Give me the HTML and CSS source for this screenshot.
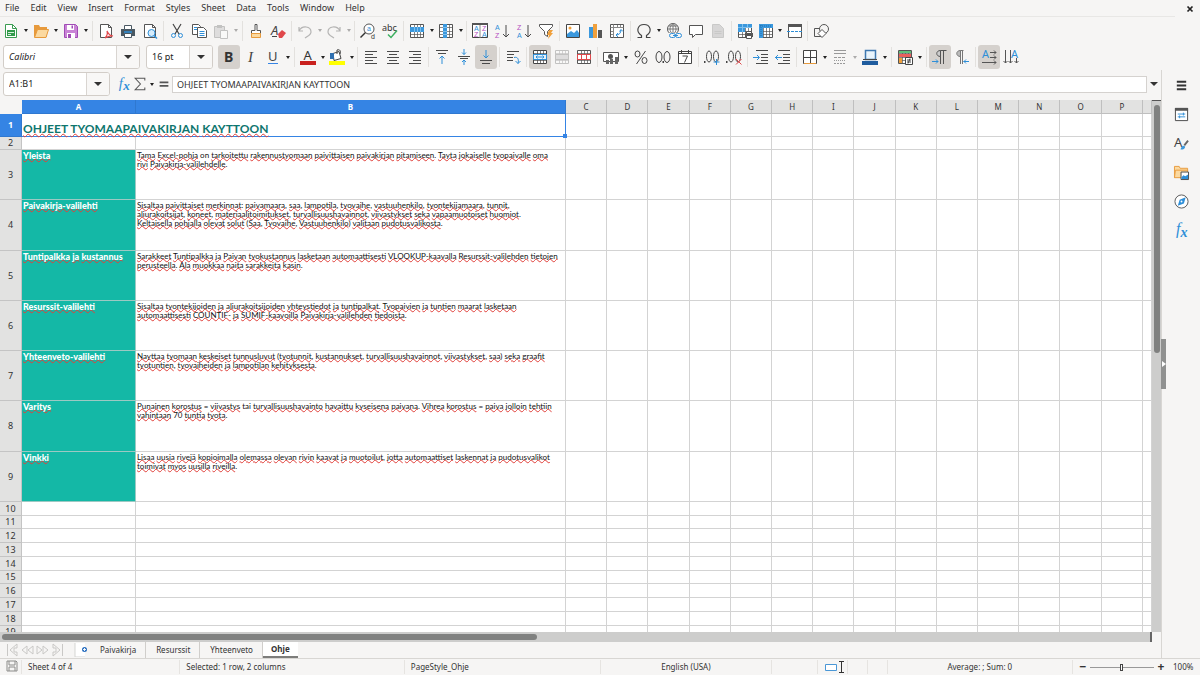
FILE: index.html
```html
<!DOCTYPE html>
<html lang="fi">
<head>
<meta charset="utf-8">
<title>Calc</title>
<link rel="stylesheet" href="styles.css">
</head>
<body>
<div class="app">
  <header class="menubar">
    <nav class="menus">
      <button>File</button><button>Edit</button><button>View</button><button>Insert</button><button>Format</button><button>Styles</button><button>Sheet</button><button>Data</button><button>Tools</button><button>Window</button><button>Help</button>
    </nav>
    <button class="close" aria-label="Close document"><svg viewBox="0 0 8 8"><path d="M1.5 1.5l5 5M6.5 1.5l-5 5" stroke="#222" stroke-width="1.7" fill="none"/></svg></button>
  </header>
  <div class="toolbar" id="standard-bar" role="toolbar" aria-label="Standard"></div>
  <div class="toolbar format" id="format-bar" role="toolbar" aria-label="Formatting">
    <div class="combo font-name"><input type="text" value="Calibri" aria-label="Font name"><button aria-label="Show fonts"><i class="tri"></i></button></div>
    <div class="combo font-size"><input type="text" value="16 pt" aria-label="Font size"><button aria-label="Show sizes"><i class="tri"></i></button></div>
  </div>
  <div class="workspace">
    <main class="document">
      <div class="formula-bar">
        <div class="combo name-box"><input type="text" value="A1:B1" aria-label="Name box"><button aria-label="Show names"><i class="tri"></i></button></div>
        <div class="formula-tools" id="formula-tools"></div>
        <input class="formula" type="text" value="OHJEET TYOMAAPAIVAKIRJAN KAYTTOON" aria-label="Formula">
        <button class="expand" aria-label="Expand formula bar"><i class="tri"></i></button>
      </div>
      <div class="sheet-area">
        <div class="sheet-view">
          <table class="sheet">
            <colgroup id="cols"></colgroup>
            <thead id="head"></thead>
            <tbody id="rows"></tbody>
          </table>
        </div>
        <div class="vscroll"><div class="vthumb"></div></div>
      </div>
      <div class="hscroll"><div class="hthumb"></div></div>
      <div class="tabs">
        <div class="tab-nav" id="tab-nav"></div>
        <button class="add-sheet" aria-label="Add sheet"><svg viewBox="0 0 14 14"><path d="M1 0h10v14H1z" fill="#fff"/><path d="M1 0v14h10" stroke="#d5d5d3" fill="none"/><circle cx="10.500" cy="6.500" r="2.500" fill="#2a6fc0"/><path d="M9 6.500h3M10.500 5v3" stroke="#fff" stroke-width=".9"/></svg></button>
        <button class="tab">Paivakirja</button><button class="tab">Resurssit</button><button class="tab">Yhteenveto</button><button class="tab active">Ohje</button>
      </div>
    </main>
    <aside class="sidebar" id="sidebar"></aside>
    <button class="sidebar-handle" aria-label="Hide sidebar"><svg viewBox="0 0 4 6"><path d="M0 0l4 3-4 3z" fill="#fff"/></svg></button>
  </div>
  <footer class="statusbar">
    <div class="save-state"><svg viewBox="0 0 12 12" fill="none" stroke="#8c8c8a"><path d="M1 1h9l1 1v9H1zM3 1v4h6V1M3 11V7h6v4"/></svg></div>
    <div>Sheet 4 of 4</div>
    <div>Selected: 1 row, 2 columns</div>
    <div>PageStyle_Ohje</div>
    <div class="centered">English (USA)</div>
    <div></div>
    <div class="mode"><svg viewBox="0 0 22 14" fill="none"><path d="M1.500 4.500h11v6h-11z" stroke="#4a97d6" fill="#fff"/><path d="M15 1.500h5M15 12.500h5M17.500 1.500v11" stroke="#333"/></svg></div>
    <div></div>
    <div></div>
    <div class="centered">Average: ; Sum: 0</div>
    <div class="zoom"><button aria-label="Zoom out">−</button><input type="range" min="0" max="100" value="49" aria-label="Zoom"><button aria-label="Zoom in">+</button><span>100%</span></div>
  </footer>
</div>
<script src="app.js"></script>
</body>
</html>
```
FILE: styles.css
```css
* { box-sizing: border-box; }
body { margin: 0; background: #f6f5f4; color: #333; font: 8px/12px "Noto Sans", sans-serif; }
button, input { font: inherit; color: inherit; border: 0; background: none; padding: 0; margin: 0; outline: 0; }
svg { display: block; }
.app { display: flex; flex-direction: column; height: 100vh; overflow: hidden; }

.menubar { display: flex; justify-content: space-between; align-items: center; height: 17px; flex: none; margin-right: 6px; font-size: 9px; }
.menus { display: flex; flex: 1; height: 17px; margin-right: 11px; border-bottom: 1px solid #e8e7e5; }
.menus button { padding: 0 6px 0 5px; }
.close svg { width: 8px; height: 8px; }

.toolbar { display: flex; align-items: center; height: 27px; flex: none; }
.format { height: 26px; padding-left: 3px; }
.group { display: flex; align-items: center; }
.group + .group::before { content: ""; width: 1px; height: 20px; margin: 0 2px; background: #e3e1de; }
.tool { display: grid; place-items: center; width: 22px; height: 24px; border-radius: 3px; }
.tool svg { width: 16px; height: 16px; overflow: visible; }
.tool.on { background: #d5d1cd; }
.tool.off { opacity: .4; }
.tight .tool { width: 21px; }
.drop { display: grid; place-items: center; width: 8px; height: 24px; }
.narrow-drop .drop { width: 7px; }
.drop::before, .tri { content: ""; display: block; width: 0; border: 2px solid transparent; border-top: 3px solid #222; border-bottom: 0; }
.drop.off { opacity: .35; }
.tri { border-width: 4px 4px 0; border-top-color: #333; }

.combo { display: flex; height: 24px; border: 1px solid #d2cdc8; border-radius: 3px; background: #fff; overflow: hidden; font-size: 9px; color: #222; }
.combo input { flex: 1; min-width: 0; padding: 0 5px; }
.combo button { width: 23px; border-left: 1px solid #d9d5d1; background: #f8f7f6; display: grid; place-items: center; }
.font-name { width: 137px; margin-right: 6px; font-style: italic; }
.font-size { width: 67px; margin-right: 5px; }

.workspace { position: relative; display: flex; flex: 1; min-height: 0; }
.document { flex: 1; min-width: 0; display: flex; flex-direction: column; border-right: 1px solid #d8d6d3; }
.formula-bar { display: flex; align-items: center; height: 30px; flex: none; padding: 0 0 2px 3px; }
.name-box { width: 107px; }
.formula-tools { display: flex; align-items: center; padding-left: 6px; }
.formula-tools .tool { width: 16px; }
.formula-tools .tool svg { width: 14px; height: 14px; }
.formula { flex: 1; min-width: 0; height: 17px; padding: 0 4px; border: 1px solid #d5d2cf; background: #fff; font-size: 9px; }
.expand { display: grid; place-items: center; width: 14px; height: 17px; }

.sheet-area { display: flex; flex: 1; min-height: 0; }
.sheet-view { flex: 1; min-width: 0; overflow: hidden; background: #fff; }
.sheet { width: 100%; table-layout: fixed; border-collapse: separate; border-spacing: 0; background: #fff; }
.sheet th, .sheet td { padding: 0; border-right: 1px solid #d3d3d3; border-bottom: 1px solid #d3d3d3; }
.sheet thead th { height: 14px; line-height: 12px; font-weight: 400; background: #e2e2e1; border-color: #bfbfbf; }
.sheet tbody th { font-size: 9px; line-height: 10px; font-weight: 400; background: #e2e2e1; border-color: #c4c4c4; }
.sheet thead .picked, .sheet tbody .picked { font-weight: 700; color: #fff; background: #3584e4; border-color: #2f78d0; }
.sheet thead .corner { background: #f6f5f4; border-color: #f6f5f4; }
.sheet td { vertical-align: top; }
.sheet .title { position: relative; vertical-align: bottom; padding-left: 1px; border-right: 1px solid #3584e4; border-bottom: 1px solid #3584e4; font: 700 12px/15px Lato, sans-serif; color: #0f766e; white-space: nowrap; }
.title::after { content: ""; position: absolute; right: -2px; bottom: -2px; width: 4px; height: 4px; background: #3584e4; }
.sheet .topic { padding-left: 1px; background: #14b8a6; border-color: #9cc9c3; font: 900 9px/11px Lato, sans-serif; color: #fff; white-space: nowrap; }
.sheet .body { padding: 1px 0 0 1px; font: 8px/9px Lato, sans-serif; color: #111; white-space: nowrap; }
.misspelt { text-decoration: underline wavy #e0403a 1px; text-decoration-skip-ink: none; text-underline-offset: -1px; }
.title .misspelt { text-underline-offset: 0; }

.vscroll { width: 9px; flex: none; padding: 4px 2px 0; background: #cdcdcc; border-top: 1px solid #555; }
.vthumb { width: 6px; height: 47%; border-radius: 3px; background: #808180; }
.hscroll { height: 10px; flex: none; margin-right: 9px; padding: 2px; background: #cdcdcc; border-right: 2px solid #666; }
.hthumb { width: 46.7%; height: 6px; border-radius: 3px; background: #808180; }

.tabs { display: flex; align-items: center; height: 16px; flex: none; }
.tab-nav { display: flex; width: 74px; padding-left: 5px; }
.tab-nav svg { width: 15px; height: 14px; }
.add-sheet svg { width: 14px; height: 14px; }
.tab { height: 16px; padding: 0 9px 0 10px; border-right: 1px solid #d0cecb; }
.add-sheet + .tab { padding-left: 12px; }
.tab.active { padding: 0 8px; font-weight: 700; background: #fff; border-right: 0; border-bottom: 2px solid #7d7d7b; }

.sidebar { width: 38px; flex: none; display: flex; flex-direction: column; align-items: center; gap: 5px; padding-top: 3px; }
.sidebar .tool svg { width: 15px; height: 15px; }
.sidebar-handle { position: absolute; right: 34px; bottom: 269px; width: 5px; height: 50px; background: #909190; display: grid; place-items: center; }
.sidebar-handle svg { width: 4px; height: 6px; }

.statusbar { display: grid; grid-template-columns: 22px 158fr 224fr 196fr 170fr 46px 30px 20px 20px 185fr 127px; align-items: center; height: 17px; flex: none; border-top: 1px solid #d8d6d3; }
.statusbar > div { height: 14px; line-height: 14px; padding-left: 6px; border-right: 1px solid #e6e4e1; white-space: nowrap; }
.statusbar > div:last-child { border-right: 0; }
.statusbar .centered { text-align: center; padding: 0; }
.save-state svg { width: 12px; height: 12px; }
.mode svg { width: 22px; height: 14px; }
.zoom { display: flex; align-items: center; gap: 3px; }
.zoom button { font-size: 12px; font-weight: 700; line-height: 12px; width: 8px; }
.zoom span { margin-left: 5px; }
.zoom input { appearance: none; width: 64px; height: 10px; background: linear-gradient(#999, #999) center / 100% 1px no-repeat; }
.zoom input::-webkit-slider-thumb { appearance: none; width: 3px; height: 7px; border: 1px solid #444; background: #fff; }
```
FILE: app.js
```js
const line = (d, c = '#4a4a4a', extra = '') => `<path d="${d}" stroke="${c}" fill="none" ${extra}/>`;
const fill = (d, c, extra = '') => `<path d="${d}" fill="${c}" ${extra}/>`;
const letter = (t, x, y, s, c, extra = '', family = 'Noto Sans') => `<text x="${x}" y="${y}" font-size="${s}" fill="${c}" font-family="${family}" ${extra}>${t}</text>`;
const small = (t, x, y, c) => letter(t, x, y, 7, c, '', 'Liberation Sans');
const blue = '#2f8fd8';
const purple = '#b44bc0';
const gridLines = (c = '#555') => '<path d="M1 1h14v14H1z" fill="#fff"/>' + line('M1.500 4.500h13M1.500 8.500h13M1.500 11.500h13M5.500 1.500v13M8.500 1.500v13M11.500 1.500v13', c, 'stroke-opacity=".7"') + line('M1.500 1.500h13v13h-13z', c);
const page = (c = '#555') => `<path d="M2.500 1.500h8l3 3v10h-11z" fill="#fff" stroke="${c}"/>` + line('M10.500 1.500v3h3', c);
const fx = letter('f', 2, 12, 17, blue, 'font-style="italic"', 'Liberation Serif') + letter('x', 7, 15, 15, blue, 'font-style="italic" font-weight="700"', 'Liberation Serif');

const icons = {
  new: '<path d="M2.500 1.500h7l4 4v9h-11z" fill="#fff" stroke="#3a9c51"/>' + line('M9.500 1.500v4h4', '#3a9c51') + fill('M4 7h8v6H4z', '#2f9a49') + line('M5 9.500h6M5 11.500h3', '#d7f0dd'),
  open: fill('M1 2h5l1 2h7v10H1z', '#e79a3c') + '<path d="M4.500 6.500h11l-2.500 8H1.500z" fill="#fbd9a0" stroke="#e79a3c"/>',
  save: '<path d="M1.500 1.500h11l2 2v11h-13z" fill="#c983d6" stroke="#a04bb5"/>' + fill('M4 2h7v5H4zM4 10h8v5H4z', '#fff') + fill('M8.500 2.500h1.500v3H8.500zM5 11h3v4H5z', '#a04bb5'),
  pdf: page() + '<path d="M7 15c2-2 3-4 2-7 2 4 4 5 6 5-3-.5-5 .5-8 2z" stroke="#e0484b" fill="#fff" stroke-width="1.200"/>',
  print: fill('M1 6h14v7H1z', '#4a5862') + '<path d="M4.500 2.500h7v4h-7zM4.500 10.500h7v4h-7z" fill="#fff" stroke="#4a5862"/>' + line('M4 9h8', blue, 'stroke-width="1.500"'),
  preview: page() + '<circle cx="9.500" cy="10" r="3.500" fill="#d6ecfb" stroke="#2f8fd8"/>' + line('M12 12.500l3 3', blue, 'stroke-width="1.500"'),
  cut: line('M4 1l6 10M12 1L6 11', '#444', 'stroke-width="1.200"') + '<circle cx="4.500" cy="12.500" r="2" fill="none" stroke="#2f8fd8"/><circle cx="11.500" cy="12.500" r="2" fill="none" stroke="#2f8fd8"/>',
  copy: '<path d="M1.500 1.500h6l2 2v8h-8z" fill="#fff" stroke="#555"/><path d="M6.500 4.500h6l3 3v7h-9z" fill="#fff" stroke="#555"/>' + line('M3 4.500h3M3 6.500h3M8.500 8.500h5M8.500 10.500h5M8.500 12.500h5', blue),
  paste: '<path d="M1.500 3.500h10v11h-10z" fill="#bbb" stroke="#777"/>' + fill('M4 2h5v3H4z', '#777') + '<path d="M7.500 7.500h7v8h-7z" fill="#fff" stroke="#777"/>',
  brush: '<path d="M7 1.500h2v6h3.500v3h-9v-3H7z" fill="#fff" stroke="#555"/><path d="M3.500 10.500h9v4h-9z" fill="#fbd9a0" stroke="#e79a3c"/>',
  clear: letter('A', 1, 12, 13, '#444', 'font-style="italic"') + fill('M8 11l4-4 4 3-4 5H9z', '#e0484b') + line('M2 13.500h5', '#444'),
  undo: line('M2 4v4h4M2 8c3-6 12-5 12 1 0 3-3 4-6 6', '#555', 'stroke-width="1.200"'),
  redo: line('M14 4v4h-4M14 8C11 2 2 3 2 9c0 3 3 4 6 6', '#555', 'stroke-width="1.200"'),
  find: '<circle cx="9" cy="6" r="5" fill="#fff" stroke="#555"/>' + line('M5.500 9.500l-5 5', '#333', 'stroke-width="1.500"') + small('a', 7, 8, blue) + small('d', 11, 16, '#333'),
  spell: letter('abc', 0, 7.500, 9, '#333') + line('M6 11.500l3 3 6-7', '#3db060', 'stroke-width="1.500"'),
  row: gridLines() + fill('M1 4h14v5H1z', '#3b98dd') + line('M5.500 4v5M8.500 4v5M11.500 4v5', '#7fc0ee'),
  column: gridLines() + fill('M5 1h4v14H5z', '#3b98dd') + line('M5 4.500h4M5 8.500h4M5 11.500h4', '#7fc0ee'),
  sort: '<path d="M.5 1.500h15v13H.5z" fill="#fff" stroke="#444"/>' + fill('M0 0h16v2H0z', '#555') + line('M8 2v13', '#888') + small('A', 2, 8, blue) + small('Z', 2, 14, purple) + small('Z', 10, 8, purple) + small('A', 10, 14, blue),
  sortAsc: small('A', 1, 7, blue) + small('Z', 1, 15, purple) + line('M12 2v12M9 11l3 3 3-3'),
  sortDesc: small('Z', 1, 7, purple) + small('A', 1, 15, blue) + line('M12 2v12M9 11l3 3 3-3'),
  filter: '<path d="M1.500 1.500h13v2l-5 5v5l-3-2V8.500l-5-5z" fill="#fff" stroke="#555"/>' + fill('M11 7h4l-2 3h2l-5 6 1-4H9z', '#f0a03c'),
  image: '<path d="M1.500 1.500h13v13h-13z" fill="#fff" stroke="#444"/>' + fill('M2 14v-3l4-3 3 2 3-3 2 3v4z', '#3b98dd') + '<circle cx="5" cy="5" r="1.500" fill="#f0a03c"/>',
  chart: fill('M2 4h4v11H2z', '#3b98dd') + fill('M6 1h4v14H6z', '#f0a03c') + fill('M11 7h4v8h-4z', '#555'),
  pivot: '<path d="M1.500 1.500h13v13h-13z" fill="#fff" stroke="#555"/>' + line('M1.500 4.500h13M4.500 1.500v13M8.500 2v2M11.500 2v2M2 8.500h2M2 11.500h2', '#888') + line('M7 12c3 0 5-2 5-5M10.500 8.500L12 6.500l2 2M9 10l-2 2 2 2', blue),
  omega: line('M1.500 14.500h4v-2C-1 8 2 1.500 8 1.500S17 8 10.500 12.500v2h4', '#444', 'stroke-width="1.200"'),
  link: '<circle cx="7" cy="6" r="5.500" fill="#fff" stroke="#555"/>' + line('M1.500 6h11M2.500 3h9M7 .5v11M7 .5c-4 3-4 8 0 11M7 .5c4 3 4 8 0 11', '#777') + '<rect x="3" y="10" width="13" height="6" fill="#f6f5f4"/><rect x="3.500" y="10.500" width="6" height="4" rx="2" fill="none" stroke="#2f8fd8"/><rect x="9.500" y="10.500" width="6" height="4" rx="2" fill="none" stroke="#2f8fd8"/>' + line('M7 12.500h5', blue),
  comment: '<path d="M1.500 2.500h13v9h-7l-3 3v-3h-3z" fill="#fff" stroke="#555"/>',
  note: '<path d="M2.500 1.500h7l4 4v9h-11z" fill="#aaa" stroke="#888"/>' + line('M4.500 8.500h7M4.500 10.500h7', '#888'),
  printRange: gridLines() + fill('M1 1h14v4H1zM1 5h7v4H1z', '#3b98dd') + line('M5.500 1v8M10.500 1v4M1 4.500h14', '#7fc0ee') + fill('M8 10h8v4H8z', '#555') + '<path d="M9.500 8.500h5v2h-5zM9.500 12.500h5v3h-5z" fill="#fff" stroke="#555"/>',
  freeze: gridLines() + fill('M1 1h14v4H1zM1 1h4v14H1z', '#3b98dd') + line('M2 3h12M3 2v12', '#1f6fae', 'stroke-dasharray="1 1"'),
  split: '<path d="M1.500 1.500h13v13h-13z" fill="#fff" stroke="#555"/>' + fill('M1 1h14v3H1z', '#555') + line('M0 8.500h16', blue, 'stroke-dasharray="3 1"'),
  shapes: '<path d="M1.500 5.500h8v8h-8z" fill="none" stroke="#555"/><circle cx="11" cy="6" r="4.500" fill="#f6f5f4" stroke="#555"/><path d="M9 6.500l4 4-4 4-4-4z" fill="#fff" stroke="#555"/>',
  bold: letter('B', 3, 13, 14, '#333', 'font-weight="700"'),
  italic: letter('I', 5, 13, 15, '#444', 'font-style="italic"', 'Liberation Serif'),
  underline: letter('U', 3, 12, 13, '#444') + line('M3 14.500h10', '#3584e4'),
  fontColor: letter('A', 3.500, 11, 13, '#333') + fill('M0 12h16v4H0z', '#c9211e'),
  fillColor: '<path d="M4 4.500l6-2 2 7-7 2z" fill="#fff" stroke="#444"/>' + line('M8 5V1c3-1 4 1 3 4', '#444') + fill('M1 4h4v6H1z', '#2f6fb0') + fill('M0 12h16v4H0z', '#ffff00'),
  left: line('M2 2.500h12M2 5.500h8M2 8.500h12M2 11.500h8M2 14.500h12'),
  center: line('M2 2.500h12M4 5.500h8M2 8.500h12M4 11.500h8M2 14.500h12'),
  right: line('M2 2.500h12M6 5.500h8M2 8.500h12M6 11.500h8M2 14.500h12'),
  top: line('M2 1.500h12M4 4.500h8') + line('M8 15V7M5.500 9.500L8 7l2.500 2.500', blue),
  middle: line('M2 7.500h12M4 9.500h8') + line('M8 0v5.500M6 3.500l2 2 2-2M8 16v-5M6 13l2-2 2 2', blue),
  bottom: line('M2 11.500h12M4 14.500h8') + line('M8 1v8M5.500 6.500L8 9l2.500-2.500', blue),
  wrap: line('M2 2.500h12M2 5.500h7M2 8.500h6M2 11.500h6') + line('M9 8.500c4-1 5 2 4 6M10.500 12l2.500 2.500L15.500 12', blue),
  merge: gridLines('#444') + '<path d="M1.500 5.500h13v5h-13z" fill="#e6f3fc" stroke="#2f8fd8"/>' + line('M4 8h8M5.500 6.500L4 8l1.500 1.500M10.500 6.500L12 8l-1.500 1.500', blue),
  mergeCells: gridLines('#777') + '<path d="M1.500 5.500h13v5h-13z" fill="#bbb" stroke="#777"/>',
  unmerge: gridLines('#555') + '<path d="M1.500 5.500h13v5h-13z" fill="#fff" stroke="#e0484b"/>' + line('M5.500 5.500v5M10.500 5.500v5', '#e0484b'),
  currency: '<path d="M.5 3.500h15v9H.5z" fill="#fff" stroke="#555"/><circle cx="7.500" cy="7.500" r="2.500" fill="#555"/>' + fill('M7 10h3v5H7zM12 8h3v7h-3zM3 11h3v4H3z', '#666'),
  percent: '<ellipse cx="4.500" cy="5" rx="2.500" ry="3" fill="none" stroke="#444"/><ellipse cx="11.500" cy="11.500" rx="2.500" ry="3" fill="none" stroke="#444"/>' + line('M12.500 2l-9 13'),
  number: '<ellipse cx="4" cy="8" rx="3" ry="5.500" fill="none" stroke="#444"/><ellipse cx="12" cy="8" rx="3" ry="5.500" fill="none" stroke="#444"/>' + fill('M7.500 12h1.500v2H7.500z', '#444'),
  date: '<path d="M1.500 2.500h13v12h-13z" fill="#fff" stroke="#444"/>' + line('M1.500 4.500h13M4.500 1v3M11.500 1v3M5.500 7h5l-3 6.500', '#444'),
  addDec: '<ellipse cx="5" cy="7.500" rx="2.500" ry="5.500" fill="none" stroke="#444"/><ellipse cx="12" cy="7.500" rx="2.500" ry="5.500" fill="none" stroke="#444"/>' + fill('M0 12h1.500v2H0z', '#444') + line('M12.500 10v6M9.500 13h6', blue),
  delDec: '<ellipse cx="5" cy="7.500" rx="2.500" ry="5.500" fill="none" stroke="#444"/><ellipse cx="12" cy="7.500" rx="2.500" ry="5.500" fill="none" stroke="#444"/>' + fill('M0 12h1.500v2H0z', '#444') + line('M10 10l5.500 5.500M15.500 10L10 15.500', '#e0484b'),
  indent: line('M3 1.500h12M8 5.500h7M8 8.500h7M8 11.500h7M3 14.500h12') + line('M0 8.500h6M4 6l2.500 2.500L4 11', blue),
  outdent: line('M3 1.500h12M8 5.500h7M8 8.500h7M8 11.500h7M3 14.500h12') + line('M7 8.500H0M3 6L.5 8.500 3 11', blue),
  borders: '<path d="M1.500 1.500h13v13h-13z" fill="#fff" stroke="#444"/>' + line('M8.500 1.500v13M1.500 8.500h13', '#444') + line('M2 14.500h12', '#e79a3c'),
  lineStyle: line('M2 1.500h12M2 4.500h12', '#999') + line('M2 8.500h12', '#999', 'stroke-dasharray="3 1"') + line('M2 11.500h12', '#999', 'stroke-dasharray="1 1"') + line('M2 14.500h12', '#999', 'stroke-dasharray="2 1"'),
  lineColor: '<path d="M3.500 1.500h10v9h-10z" fill="#e9f4fc" stroke="#3f78b0" stroke-width="1.500"/>' + line('M1 10.500h14', '#444') + fill('M0 12h16v4H0z', '#1f5c9e'),
  conditional: gridLines() + fill('M2 2h12v2H2z', '#5fc07a') + fill('M2 5h12v3H2z', '#e8605c') + fill('M2 9h3v5H2z', '#f0a03c') + '<path d="M8.500 8.500h7v7h-7z" fill="#fff" stroke="#444"/>' + line('M10 11h4M10 13h4M13 9.500L11 14.500', '#444'),
  ltr: line('M8.500 15V1.500h6M11.500 1.500V15', '#555') + '<path d="M8.500 1.500c-5 0-5 6 0 6z" fill="#ccc" stroke="#555"/>' + line('M0 12.500h6M4 10.500l2 2-2 2', blue),
  rtl: line('M6.500 15V1.500h3M8.500 1.500V15', '#777') + '<path d="M6.500 1.500c-5 0-5 6 0 6z" fill="#bbb" stroke="#777"/>' + line('M15 12.500H9.500M12 10.500l-2 2 2 2', blue),
  horizontal: letter('A', 1, 9, 11, blue) + line('M9 3.500h6M13 1.500l2 2-2 2M9 8.500h6M13 6.500l2 2-2 2M1 13.500h14M13 11.500l2 2-2 2', '#555'),
  vertical: letter('A', 8, 9, 11, blue) + line('M2.500 1v13M.5 12l2 2 2-2M7.500 1v13M5.500 12l2 2 2-2M13.500 9v5M11.500 12l2 2 2-2', '#555'),
  fx,
  sigma: line('M13.500 4V1.500H2.500L8.500 8l-6 6.500h11V12', '#555', 'stroke-width="1.200"'),
  equals: fill('M3 5h10v2H3zM3 9h10v2H3z', '#555'),
  menu: fill('M3 3h10v2H3zM3 7h10v2H3zM3 11h10v2H3z', '#333'),
  properties: '<path d="M1.500 1.500h13v13h-13z" fill="#fff" stroke="#444"/>' + fill('M1 1h14v3H1z', '#555') + line('M4 7.500h8M4 10.500h8M10 6v3M6 9v3', blue),
  styles: letter('A', 0, 12, 14, '#444') + line('M15 5l-4 5', '#666', 'stroke-width="2"') + fill('M7 14.500c1-4 3-5 5-3-1 3-3 3-5 3z', '#3b98dd'),
  gallery: '<path d="M.5 13.500v-12h5l1 2h8v3" fill="#fbd9a0" stroke="#e79a3c"/><path d="M.5 13.500l1-8h13v8z" fill="#fbd9a0" stroke="#e79a3c"/><path d="M7.500 7.500h8v8h-8z" fill="#fff" stroke="#444"/>' + fill('M8 15v-2l2-2 2 1 3-2v5z', blue),
  navigator: '<circle cx="8" cy="8" r="7" fill="#fff" stroke="#555"/>' + fill('M12.500 3.500l-2 6.500-6.500 2.500 2-6.500z', blue) + '<circle cx="8" cy="8" r="1" fill="#fff"/>'
};

const svg = name => `<svg viewBox="0 0 16 16" aria-hidden="true">${icons[name]}</svg>`;
const tool = item => {
  if (item === 'v') return '<button class="drop" aria-label="More"></button>';
  if (item === 'v-') return '<button class="drop off" aria-label="More"></button>';
  const [name, state = ''] = item.split(':');
  return `<button class="tool ${state}" aria-label="${name}">${svg(name)}</button>`;
};
const bar = groups => groups.map(g => {
  const [items, cls = ''] = g.split('|');
  return `<div class="group ${cls}">${items.split(' ').map(tool).join('')}</div>`;
}).join('');
const put = (id, html) => document.getElementById(id).insertAdjacentHTML('beforeend', html);

put('standard-bar', bar([
  'new v open v save v', 'pdf print preview', 'cut copy paste:off v-', 'brush clear', 'undo:off v- redo:off v-|narrow-drop',
  'find spell', 'row v column v|narrow-drop', 'sort sortAsc sortDesc filter', 'image chart pivot',
  'omega v link comment note:off', 'printRange freeze v split|tight', 'shapes'
]));
put('format-bar', bar([
  'bold:on italic underline v', 'fontColor v fillColor v|narrow-drop', 'left center right', 'top middle bottom:on', 'wrap',
  'merge:on mergeCells:off unmerge', 'currency v percent number date', 'addDec delDec', 'indent outdent',
  'borders v lineStyle v- lineColor v', 'conditional v', 'ltr:on rtl', 'horizontal:on vertical'
]));
put('formula-tools', ['fx', 'sigma', 'v', 'equals'].map(tool).join(''));
put('sidebar', ['menu', 'properties', 'styles', 'gallery', 'navigator', 'fx'].map(tool).join(''));
put('tab-nav', ['M2.500 1v12M12 1L5 7l7 6V9H9V5h3z', 'M7 3L2 7l5 4zM13 3L8 7l5 4z', 'M2 3l5 4-5 4zM8 3l5 4-5 4z', 'M12.500 1v12M3 1l7 6-7 6V9h3V5H3z']
  .map(d => `<svg viewBox="0 0 15 14">${line(d, '#c9c8c6')}</svg>`).join(''));

const topics = [
  ['Yleista', 'Tama Excel-pohja on tarkoitettu rakennustyomaan paivittaisen paivakirjan pitamiseen. Tayta jokaiselle tyopaivalle oma\nrivi Paivakirja-valilehdelle.'],
  ['Paivakirja-valilehti', 'Sisaltaa paivittaiset merkinnat: paivamaara, saa, lampotila, tyovaihe, vastuuhenkilo, tyontekijamaara, tunnit,\naliurakoitsijat, koneet, materiaalitoimitukset, turvallisuushavainnot, viivastykset seka vapaamuotoiset huomiot.\nKeltaisella pohjalla olevat solut (Saa, Tyovaihe, Vastuuhenkilo) valitaan pudotusvalikosta.'],
  ['Tuntipalkka ja kustannus', 'Sarakkeet Tuntipalkka ja Paivan tyokustannus lasketaan automaattisesti VLOOKUP-kaavalla Resurssit-valilehden tietojen\nperusteella. Ala muokkaa naita sarakkeita kasin.'],
  ['Resurssit-valilehti', 'Sisaltaa tyontekijoiden ja aliurakoitsijoiden yhteystiedot ja tuntipalkat. Tyopaivien ja tuntien maarat lasketaan\nautomaattisesti COUNTIF- ja SUMIF-kaavoilla Paivakirja-valilehden tiedoista.'],
  ['Yhteenveto-valilehti', 'Nayttaa tyomaan keskeiset tunnusluvut (tyotunnit, kustannukset, turvallisuushavainnot, viivastykset, saa) seka graafit\ntyotuntien, tyovaiheiden ja lampotilan kehityksesta.'],
  ['Varitys', 'Punainen korostus = viivastys tai turvallisuushavainto havaittu kyseisena paivana. Vihrea korostus = paiva jolloin tehtiin\nvahintaan 70 tuntia tyota.'],
  ['Vinkki', 'Lisaa uusia rivejä kopioimalla olemassa olevan rivin kaavat ja muotoilut, jotta automaattiset laskennat ja pudotusvalikot\ntoimivat myos uusilla riveilla.']
];
const known = new Set(['on', 'tai']);
const spell = text => text.replace(/[A-Za-zä-]+/g, w => known.has(w) ? w : `<span class="misspelt">${w}</span>`).replace(/\n/g, '<br>');

const letters = 'ABCDEFGHIJKLMNOP'.split('');
const widths = [22, 114, 430, ...Array(14).fill(0), 9];
put('cols', widths.map(w => w ? `<col style="width:${w}px">` : '<col>').join(''));
put('head', `<tr><th class="corner"></th>${letters.map(l => `<th class="${l < 'C' ? 'picked' : ''}">${l}</th>`).join('')}<th></th></tr>`);

const blank = n => '<td></td>'.repeat(n);
const heights = [23, 13, ...Array(7).fill(50.25), ...Array(10).fill(13.75)];
let edge = 0;
put('rows', heights.map((h, i) => {
  const height = Math.round(edge + h) - Math.round(edge);
  edge += h;
  const topic = topics[i - 2];
  let cells = blank(17);
  if (i === 0) cells = `<td class="title" colspan="2">${spell('OHJEET TYOMAAPAIVAKIRJAN KAYTTOON')}</td>${blank(15)}`;
  else if (topic) cells = `<td class="topic">${spell(topic[0])}</td><td class="body">${spell(topic[1])}</td>${blank(15)}`;
  return `<tr style="height:${height}px"><th class="${i ? '' : 'picked'}">${i + 1}</th>${cells}</tr>`;
}).join(''));
```
